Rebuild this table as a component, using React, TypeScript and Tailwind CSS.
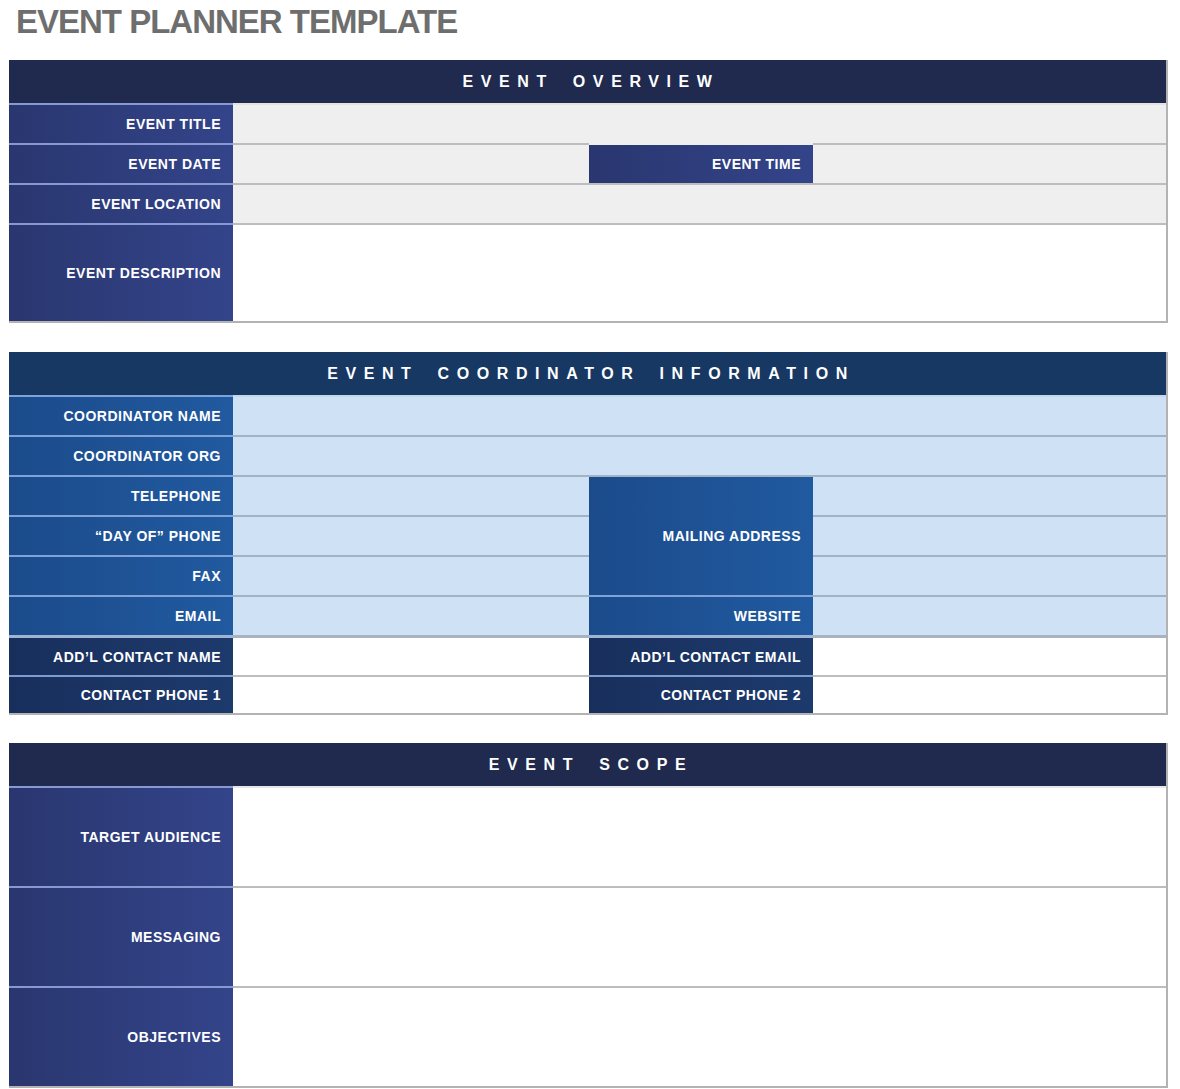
import React from "react";

const font = { fontFamily: '"Liberation Sans", Arial, sans-serif' };

function Header({ text, bg }: { text: string; bg: string }) {
  return (
    <div className={`h-[43px] flex items-center justify-center ${bg}`}>
      <span className="text-white font-bold text-[16px] tracking-[7.6px] [word-spacing:7px] pl-[7px]">{text}</span>
    </div>
  );
}

type LabelKind = "navy" | "blue" | "dark";

function Label({ text, kind, className = "" }: { text: string; kind: LabelKind; className?: string }) {
  const cls =
    kind === "navy"
      ? "bg-gradient-to-r from-[#29366f] to-[#34448a] border-[#8798d2]"
      : kind === "blue"
      ? "bg-gradient-to-r from-[#1b4b8b] to-[#215aa0] border-[#7fa3d8]"
      : "bg-gradient-to-r from-[#182f5c] to-[#1d3a6d] border-[#7f9cd0]";
  return (
    <div className={`border-t-2 flex items-center justify-end pr-[12px] ${cls} ${className}`}>
      <span className="text-white font-bold text-[14px] tracking-[0.5px] leading-none">{text}</span>
    </div>
  );
}

function Value({ bg, border, className = "" }: { bg: string; border: string; className?: string }) {
  return <div className={`border-t-2 ${bg} ${border} ${className}`} />;
}

export default function App() {
  const gray = "bg-[#efefef]";
  const gb = "border-[#bdbdbd]";
  const lb = "bg-[#cfe1f5]";
  const lbb = "border-[#a3b3c6]";
  const wb = "bg-white";
  return (
    <div className="w-[1180px] h-[1089px] bg-white overflow-hidden" style={font}>
      <div className="h-[60px] pl-[16px] pt-[2px]">
        <h1 className="text-[33px] font-bold text-[#6e6e6e] tracking-[-1px] leading-[40px]">EVENT PLANNER TEMPLATE</h1>
      </div>

      <div className="ml-[9px] w-[1159px]">
        {/* Section 1 */}
        <div className="border-r-2 border-b-2 border-[#b3b3b3]">
          <Header text="EVENT OVERVIEW" bg="bg-[#1f2a4e]" />
          <div className="grid grid-cols-[224px_356px_224px_1fr] grid-rows-[40px_40px_40px_98px]">
            <Label text="EVENT TITLE" kind="navy" />
            <Value bg={gray} border="border-[#e3e3e3]" className="col-span-3" />
            <Label text="EVENT DATE" kind="navy" />
            <Value bg={gray} border={gb} />
            <Label text="EVENT TIME" kind="navy" className="border-[#efefef]" />
            <Value bg={gray} border={gb} />
            <Label text="EVENT LOCATION" kind="navy" />
            <Value bg={gray} border={gb} className="col-span-3" />
            <Label text="EVENT DESCRIPTION" kind="navy" />
            <Value bg={wb} border={gb} className="col-span-3" />
          </div>
        </div>

        <div className="h-[29px]" />

        {/* Section 2 */}
        <div className="border-r-2 border-b-2 border-[#b3b3b3]">
          <Header text="EVENT COORDINATOR INFORMATION" bg="bg-[#173862]" />
          <div className="grid grid-cols-[224px_356px_224px_1fr] grid-rows-[40px_40px_40px_40px_40px_40px_40px_38px]">
            <Label text="COORDINATOR NAME" kind="blue" />
            <Value bg={lb} border="border-[#c4d6ec]" className="col-span-3" />
            <Label text="COORDINATOR ORG" kind="blue" />
            <Value bg={lb} border={lbb} className="col-span-3" />

            <Label text="TELEPHONE" kind="blue" />
            <Value bg={lb} border={lbb} />
            <Label text="MAILING ADDRESS" kind="blue" className="row-span-3 border-[#a3b3c6]" />
            <Value bg={lb} border={lbb} />

            <Label text={"\u201CDAY OF\u201D PHONE"} kind="blue" />
            <Value bg={lb} border={lbb} />
            <Value bg={lb} border={lbb} />

            <Label text="FAX" kind="blue" />
            <Value bg={lb} border={lbb} />
            <Value bg={lb} border={lbb} />

            <Label text="EMAIL" kind="blue" />
            <Value bg={lb} border={lbb} />
            <Label text="WEBSITE" kind="blue" />
            <Value bg={lb} border={lbb} />

            <Label text={"ADD\u2019L CONTACT NAME"} kind="dark" className="border-t-[3px] border-[#9fb3d3]" />
            <Value bg={wb} border="border-[#a9b3bf]" className="border-t-[3px]" />
            <Label text={"ADD\u2019L CONTACT EMAIL"} kind="dark" className="border-t-[3px] border-[#9fb3d3]" />
            <Value bg={wb} border="border-[#a9b3bf]" className="border-t-[3px]" />

            <Label text="CONTACT PHONE 1" kind="dark" />
            <Value bg={wb} border={gb} />
            <Label text="CONTACT PHONE 2" kind="dark" />
            <Value bg={wb} border={gb} />
          </div>
        </div>

        <div className="h-[28px]" />

        {/* Section 3 */}
        <div className="border-r-2 border-b-2 border-[#b3b3b3]">
          <Header text="EVENT SCOPE" bg="bg-[#1f2a4e]" />
          <div className="grid grid-cols-[224px_1fr] grid-rows-[100px_100px_100px]">
            <Label text="TARGET AUDIENCE" kind="navy" />
            <Value bg={wb} border="border-[#e6e6e6]" />
            <Label text="MESSAGING" kind="navy" />
            <Value bg={wb} border={gb} />
            <Label text="OBJECTIVES" kind="navy" />
            <Value bg={wb} border={gb} />
          </div>
        </div>
      </div>
    </div>
  );
}
